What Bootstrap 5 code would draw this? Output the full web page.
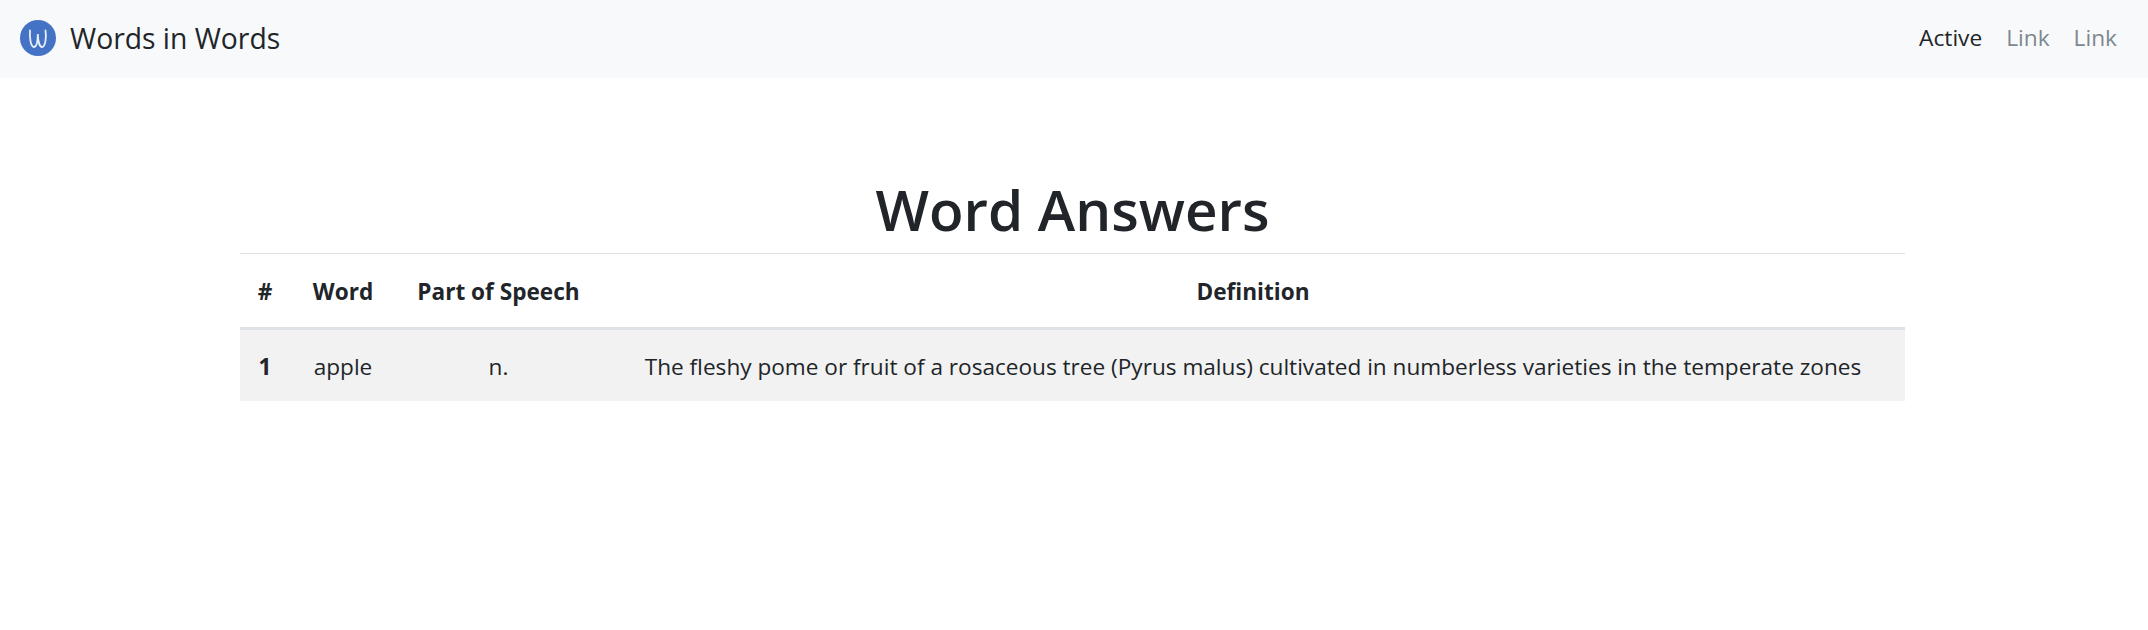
<!DOCTYPE html>
<html lang="en">
<head>
    <meta charset="UTF-8">
    <meta name="viewport" content="width=device-width, initial-scale=1">
    <title>Words in Words</title>
    <link href="https://cdn.jsdelivr.net/npm/bootstrap@5.3.0/dist/css/bootstrap.min.css" rel="stylesheet">
    <style>
        body { font-family: "Open Sans", "Noto Sans", sans-serif; color: #212529; font-size: 22.6px; }
        .top-nav { height: 78px; padding: 0 20px 2px 20px; background-color: #f8f9fa; }
        .top-nav .navbar-brand { font-size: 28.3px; padding: 0; margin: 0; color: #212529; }
        .brand-logo { width: 36px; height: 36px; margin-right: 14px; }
        .top-nav .nav-link { font-size: 22.7px; padding: 0 12.5px; color: #7d8790; }
        .top-nav .nav-link.active { color: #212529; }
        .top-nav .navbar-nav { margin-right: 3px; gap: 8px; }
        .answers { width: 1665px; margin-left: 240px; }
        .answers-title { font-size: 56.6px; font-weight: 600; line-height: 72px; margin: 0; padding-top: 96px; height: 175px; text-align: center; color: #212529; }
        .answers-table { table-layout: fixed; width: 100%; margin: 0; border-top: 1px solid #dee2e6; }
        .answers-table th, .answers-table td { height: 72px; padding: 3px 0 0; text-align: center; vertical-align: middle; border-bottom: 0; }
        .answers-table thead th { border-bottom: 3px solid #dee2e6; height: 75px; padding-top: 2px; font-size: 22.6px; font-weight: 700; }
        .answers-table tbody tr { background-color: #f2f2f2; }
        .col-num { width: 50px; }
        .col-word { width: 106px; }
        .col-pos { width: 205px; }
    </style>
</head>
<body>
    <nav class="navbar navbar-expand top-nav">
        <div class="d-flex justify-content-between align-items-center w-100">
            <a class="navbar-brand d-flex align-items-center" href="#">
                <svg class="brand-logo" viewBox="0 0 36 36" aria-hidden="true">
                    <circle cx="18" cy="18" r="18" fill="#4472c4"/>
                    <path d="M10 10.5C9.5 17 10.5 27 14 27C16.5 27 17.7 21 17.8 14C18 21 19.5 27 22 27C25.5 27 26.5 17 25.5 10.5" fill="none" stroke="#e8eef8" stroke-width="1.8" stroke-linecap="round"/>
                </svg>
                Words in Words
            </a>
            <ul class="navbar-nav flex-row">
                <li class="nav-item"><a class="nav-link active" href="#">Active</a></li>
                <li class="nav-item"><a class="nav-link" href="#">Link</a></li>
                <li class="nav-item"><a class="nav-link" href="#">Link</a></li>
            </ul>
        </div>
    </nav>

    <div class="answers">
        <h1 class="answers-title">Word Answers</h1>
        <table class="table answers-table">
            <colgroup>
                <col class="col-num">
                <col class="col-word">
                <col class="col-pos">
                <col>
            </colgroup>
            <thead>
                <tr>
                    <th scope="col">#</th>
                    <th scope="col">Word</th>
                    <th scope="col">Part of Speech</th>
                    <th scope="col">Definition</th>
                </tr>
            </thead>
            <tbody>
                <tr>
                    <th scope="row">1</th>
                    <td>apple</td>
                    <td>n.</td>
                    <td>The fleshy pome or fruit of a rosaceous tree (Pyrus malus) cultivated in numberless varieties in the temperate zones</td>
                </tr>
            </tbody>
        </table>
    </div>

    <script src="https://cdn.jsdelivr.net/npm/bootstrap@5.3.0/dist/js/bootstrap.bundle.min.js"></script>
</body>
</html>
